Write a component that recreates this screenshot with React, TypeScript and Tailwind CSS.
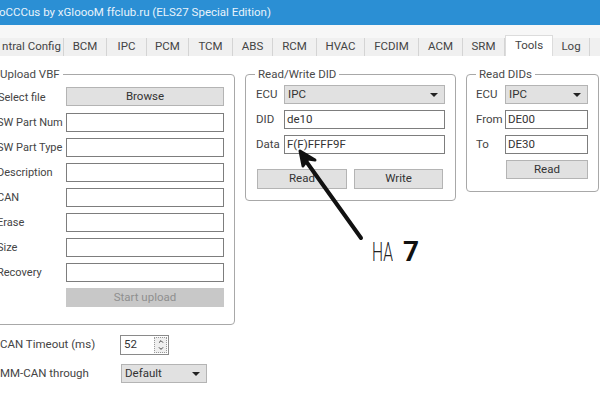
import { ChevronDown, ChevronUp } from 'lucide-react';
import type { ReactNode } from 'react';

const tabs = [
  { label: 'ntral Config', w: 'w-[64px]' },
  { label: 'BCM', w: 'w-[43px]' },
  { label: 'IPC', w: 'w-[40px]' },
  { label: 'PCM', w: 'w-[42px]' },
  { label: 'TCM', w: 'w-[44px]' },
  { label: 'ABS', w: 'w-[40px]' },
  { label: 'RCM', w: 'w-[44px]' },
  { label: 'HVAC', w: 'w-[48px]' },
  { label: 'FCDIM', w: 'w-[54px]' },
  { label: 'ACM', w: 'w-[44px]' },
  { label: 'SRM', w: 'w-[42px]' },
];

function Group({ title, className, titleClass = 'left-[9px]', children }: { title: string; className: string; titleClass?: string; children: ReactNode }) {
  return (
    <div className={`relative rounded-[4px] border border-[#a8a8a8] ${className}`}>
      <span className={`absolute top-[-9px] bg-white px-[3px] text-[11.5px] leading-[16px] whitespace-nowrap text-[#4a4a4a] ${titleClass}`}>{title}</span>
      {children}
    </div>
  );
}

function Field({ value = '', className = '' }: { value?: string; className?: string }) {
  return (
    <div className={`flex h-[19px] items-center border border-[#7d7d7d] bg-white px-[2px] text-[11.5px] text-[#333] ${className}`}>
      {value}
    </div>
  );
}

function Button({ label, className = '' }: { label: string; className?: string }) {
  return (
    <div className={`flex items-center justify-center border border-[#b4b4b4] bg-[#e1e1e1] text-[11.5px] text-[#333] ${className}`}>
      {label}
    </div>
  );
}

function Select({ value, className = '' }: { value: string; className?: string }) {
  return (
    <div className={`flex h-[19px] items-center justify-between border border-[#b4b4b4] bg-[#e1e1e1] pr-[6px] pl-[3px] text-[11.5px] text-[#333] ${className}`}>
      {value}
      <span className="h-0 w-0 border-x-[4px] border-t-[4px] border-x-transparent border-t-[#222]" />
    </div>
  );
}

function Row({ label, children, labelClass }: { label: string; children: ReactNode; labelClass: string }) {
  return (
    <div className="flex items-center">
      <span className={`shrink-0 leading-[19px] whitespace-nowrap text-[#444] ${labelClass}`}>{label}</span>
      {children}
    </div>
  );
}

export default function App() {
  return (
    <div className="relative h-[400px] w-[600px] overflow-hidden bg-white font-['Roboto','Liberation_Sans',sans-serif]">
      {/* TITLE BAR */}
      <div className="flex h-[25px] items-center bg-[#2b8fd4] text-[11.5px] whitespace-nowrap text-[#e8f3fb]">
        <span className="ml-[-1px]">oCCCus by xGloooM ffclub.ru (ELS27 Special Edition)</span>
      </div>

      {/* TABS */}
      <div className="flex h-[31px] items-end bg-[#f7f7f7] text-[11.5px] text-[#444]">
        {tabs.map((t) => (
          <div key={t.label} className={`flex h-[18px] shrink-0 items-center justify-center border-r border-[#d4d4d4] bg-[#f0f0f0] whitespace-nowrap ${t.w}`}>
            {t.label}
          </div>
        ))}
        <div className="flex h-[21px] w-[48px] shrink-0 items-center justify-center border-x border-t border-[#dcdcdc] bg-white">Tools</div>
        <div className="flex h-[18px] w-[37px] shrink-0 items-center justify-center border-r border-[#d4d4d4] bg-[#f0f0f0]">Log</div>
        <div className="h-[18px] flex-1 bg-[#f0f0f0]" />
      </div>

      {/* TOOL PANELS */}
      <div className="flex items-start gap-[10px] pt-[18px]">
        <div className="ml-[-20px] w-[255px] shrink-0">
          <Group title="Upload VBF" titleClass="left-[16px]" className="h-[251px] w-[255px] pt-[12px] pr-[10px] pl-[19px]">
            <div className="flex flex-col gap-[6px]">
              <Row label="Select file" labelClass="ml-[-2px] w-[68px] text-[11px]">
                <Button label="Browse" className="mb-[1px] h-[19px] flex-1" />
              </Row>
              {['SW Part Num', 'SW Part Type', 'Description', 'CAN', 'Erase', 'Size', 'Recovery'].map((l) => (
                <Row key={l} label={l} labelClass="ml-[-3px] w-[69px] text-[11px]">
                  <Field className="flex-1" />
                </Row>
              ))}
              <Row label="" labelClass="w-[66px]">
                <div className="flex h-[19px] flex-1 items-center justify-center bg-[#c8c8c8] text-[11.5px] text-[#8f8f8f]">Start upload</div>
              </Row>
            </div>
          </Group>
          <div className="mt-[10px] flex items-center pl-[20px]">
            <span className="w-[120px] text-[11.5px] whitespace-nowrap text-[#444]">CAN Timeout (ms)</span>
            <div className="flex h-[20px] w-[49px] items-center justify-between border border-[#8a8a8a] pr-[1px] pl-[3px] text-[11.5px] text-[#333]">
              52
              <div className="flex h-[16px] w-[13px] flex-col items-center justify-center border border-dotted border-[#999] bg-[#efefef] text-[#222]">
                <ChevronUp size={8} strokeWidth={3} />
                <ChevronDown size={8} strokeWidth={3} />
              </div>
            </div>
          </div>
          <div className="mt-[9px] flex items-center pl-[20px]">
            <span className="w-[121px] text-[11.5px] whitespace-nowrap text-[#444]">MM-CAN through</span>
            <Select value="Default" className="w-[86px]" />
          </div>
        </div>

        <Group title="Read/Write DID" className="h-[127px] w-[211px] shrink-0 pt-[10px] pr-[10px] pl-[10px]">
          <div className="flex flex-col gap-[6px]">
            <Row label="ECU" labelClass="w-[28px] text-[11.5px]">
              <Select value="IPC" className="flex-1" />
            </Row>
            <Row label="DID" labelClass="w-[28px] text-[11.5px]">
              <Field value="de10" className="flex-1" />
            </Row>
            <Row label="Data" labelClass="w-[28px] text-[11.5px]">
              <Field value="F(F)FFFF9F" className="flex-1 border-[#5b8aa5] bg-[#f6fdff]" />
            </Row>
          </div>
          <div className="mt-[15px] flex gap-[7px] pl-[1px]">
            <Button label="Read" className="h-[20px] w-[90px]" />
            <Button label="Write" className="h-[20px] w-[89px]" />
          </div>
        </Group>

        <Group title="Read DIDs" className="h-[118px] w-[133px] shrink-0 pt-[10px] pr-[10px] pl-[9px]">
          <div className="flex flex-col gap-[6px]">
            <Row label="ECU" labelClass="w-[29px] text-[11.5px]">
              <Select value="IPC" className="flex-1" />
            </Row>
            <Row label="From" labelClass="w-[29px] text-[11.5px]">
              <Field value="DE00" className="flex-1" />
            </Row>
            <Row label="To" labelClass="w-[29px] text-[11.5px]">
              <Field value="DE30" className="flex-1" />
            </Row>
            <div className="pl-[30px]">
              <Button label="Read" className="h-[19px] w-[82px]" />
            </div>
          </div>
        </Group>
      </div>

      {/* HAND-DRAWN ARROW */}
      <svg className="absolute top-0 left-0" width="600" height="400" viewBox="0 0 600 400" fill="none">
        <path d="M361 238 L303 157" stroke="#111" strokeWidth="4" strokeLinecap="round" />
        <path d="M300 151 L303 166 L308 159 L315 160 Z" fill="#111" stroke="#111" strokeWidth="3" strokeLinejoin="round" />
      </svg>

      {/* HAND-WRITTEN NOTE */}
      <span className="absolute top-[240px] left-[372px] origin-left scale-x-[0.6] text-[26px] leading-[24px] font-light text-[#222]">НА</span>
      <span className="absolute top-[240px] left-[403px] text-[28px] leading-[24px] font-bold text-[#111]">7</span>
    </div>
  );
}
